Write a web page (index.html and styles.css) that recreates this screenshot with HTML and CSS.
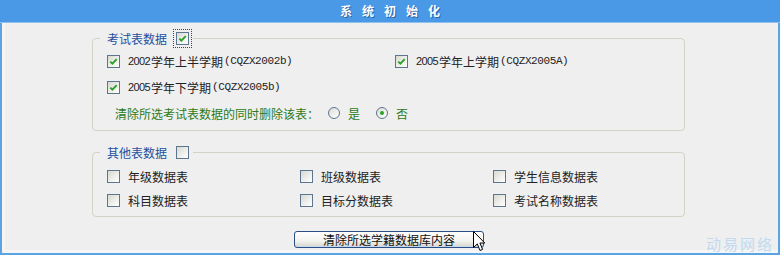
FILE: index.html
```html
<!DOCTYPE html>
<html lang="zh-CN">
<head>
  <meta charset="UTF-8" />
  <title>系统初始化</title>
  <link rel="stylesheet" href="styles.css">
</head>
<body>
  <div class="page">
    <div class="title">系统初始化</div>
    <div class="main">
      <fieldset class="group group-exam">
        <legend><span class="legend-text">考试表数据</span><span class="box checked focus"><svg viewBox="0 0 11 11"><path d="M2.3 5.6 L4.4 7.7 L8.7 3.2" /></svg></span></legend>
        <div class="grid two">
          <label class="item"><span class="box checked"><svg viewBox="0 0 11 11"><path d="M2.3 5.6 L4.4 7.7 L8.7 3.2" /></svg></span><span class="num">2002</span>学年上半学期<span class="code">(CQZX2002b)</span></label>
          <label class="item"><span class="box checked"><svg viewBox="0 0 11 11"><path d="M2.3 5.6 L4.4 7.7 L8.7 3.2" /></svg></span><span class="num">2005</span>学年上学期<span class="code">(CQZX2005A)</span></label>
          <label class="item"><span class="box checked"><svg viewBox="0 0 11 11"><path d="M2.3 5.6 L4.4 7.7 L8.7 3.2" /></svg></span><span class="num">2005</span>学年下学期<span class="code">(CQZX2005b)</span></label>
        </div>
        <div class="delete-row">
          <span class="delete-text">清除所选考试表数据的同时删除该表：</span>
          <span class="radio"></span><span class="radio-text">是</span>
          <span class="radio on"></span><span class="radio-text">否</span>
        </div>
      </fieldset>

      <fieldset class="group group-other">
        <legend><span class="legend-text">其他表数据</span><span class="box"></span></legend>
        <div class="grid three">
          <label class="item"><span class="box"></span>年级数据表</label>
          <label class="item"><span class="box"></span>班级数据表</label>
          <label class="item"><span class="box"></span>学生信息数据表</label>
          <label class="item"><span class="box"></span>科目数据表</label>
          <label class="item"><span class="box"></span>目标分数据表</label>
          <label class="item"><span class="box"></span>考试名称数据表</label>
        </div>
      </fieldset>

      <div class="actions">
        <button class="btn">清除所选学籍数据库内容</button>
      </div>

      <div class="watermark">动易网络</div>
      <svg class="cursor" viewBox="0 0 13 21"><path d="M0.5 0.5 L0.5 16.5 L4.3 12.9 L7 19.5 L9.6 18.4 L6.9 12 L11.8 12 Z" /></svg>
    </div>
  </div>
</body>
</html>
```
FILE: styles.css
```css
html, body {
  margin: 0;
  padding: 0;
  background: #efefef;
  font-family: "Noto Sans CJK SC", sans-serif;
  font-size: 12px;
  color: #222;
}
.page {
  width: 780px;
  height: 255px;
  display: flex;
  flex-direction: column;
}
.title {
  height: 22px;
  line-height: 22px;
  background: #4a99e6;
  border-bottom: 1px solid #8fc1ee;
  color: #fff;
  font-weight: 700;
  text-align: center;
  letter-spacing: 10px;
  padding-left: 10px;
  text-shadow: 1px 1px 0 #2b64a8;
}
.main {
  flex: 1;
  position: relative;
  background: #efefef;
  border: 2px solid #5aa4e4;
  border-top: none;
  padding-top: 7px;
  box-shadow: inset 3px 0 0 #f7f3f3, inset 0 -3px 0 #f6f6f6;
}
.group {
  box-sizing: border-box;
  width: 593px;
  margin: 0 0 0 90px;
  border: 1px solid #d2d2c6;
  border-radius: 4px;
  padding: 2px 0 4px 14px;
  min-width: 0;
}
.group-other {
  margin-top: 13px;
  padding-top: 4px;
}
legend {
  display: flex;
  align-items: center;
  height: 16px;
  margin-left: -7px;
  padding: 0 4px 0 7px;
}
.legend-text {
  color: #1d4f9f;
}
legend .box {
  margin-left: 9px;
}
.box {
  box-sizing: border-box;
  width: 13px;
  height: 13px;
  border: 1px solid #5c7690;
  background: linear-gradient(135deg, #d9d9d2 0%, #f4f4f1 70%, #fff 100%);
  display: inline-flex;
  flex-shrink: 0;
}
.box svg {
  width: 11px;
  height: 11px;
}
.box path {
  fill: none;
  stroke: #2aa22a;
  stroke-width: 1.9;
}
.focus {
  outline: 1px dotted #444;
  outline-offset: 2px;
}
.grid {
  display: grid;
}
.grid.two {
  grid-template-columns: 288px 1fr;
  grid-auto-rows: 26px;
}
.grid.three {
  grid-template-columns: 193px 193px 1fr;
  grid-auto-rows: 24px;
}
.item {
  display: flex;
  align-items: center;
}
.item .box {
  margin-right: 8px;
}
.num {
  font-family: "Liberation Sans", sans-serif;
  font-size: 11px;
  letter-spacing: -0.6px;
  margin-right: 1px;
}
.code {
  font-family: "Liberation Mono", monospace;
  font-size: 11px;
  letter-spacing: -0.4px;
  margin-left: 1px;
}
.delete-row {
  height: 26px;
  display: flex;
  align-items: center;
  padding-left: 8px;
  color: #2c7a20;
}
.radio {
  box-sizing: border-box;
  width: 12px;
  height: 12px;
  border: 1px solid #5c7690;
  border-radius: 50%;
  background: linear-gradient(135deg, #dcdcd6, #fff);
  margin-left: 9px;
  display: inline-flex;
  align-items: center;
  justify-content: center;
}
.radio + .radio-text {
  margin-left: 8px;
}
.radio-text + .radio {
  margin-left: 16px;
}
.radio.on::after {
  content: '';
  width: 4px;
  height: 4px;
  border-radius: 50%;
  background: #2aa22a;
}
.actions {
  display: flex;
  justify-content: center;
  margin-top: 14px;
}
.btn {
  width: 190px;
  height: 17px;
  padding: 0;
  margin-right: 2px;
  border: 1px solid #2a4f86;
  border-radius: 3px;
  background: linear-gradient(#ffffff 0%, #f2f2ee 60%, #d6d6ce 100%);
  font-family: "Noto Sans CJK SC", sans-serif;
  font-size: 12px;
  line-height: 15px;
  color: #111;
  box-shadow: inset 0 -1px 0 #c8d8ee;
}
.watermark {
  position: absolute;
  right: 4px;
  bottom: 2px;
  font-size: 15px;
  line-height: 14px;
  letter-spacing: 2px;
  color: #c2daef;
}
.cursor {
  position: absolute;
  left: 471px;
  top: 208px;
  width: 13px;
  height: 21px;
}
.cursor path {
  fill: #fff;
  stroke: #000;
  stroke-width: 1;
}
```
